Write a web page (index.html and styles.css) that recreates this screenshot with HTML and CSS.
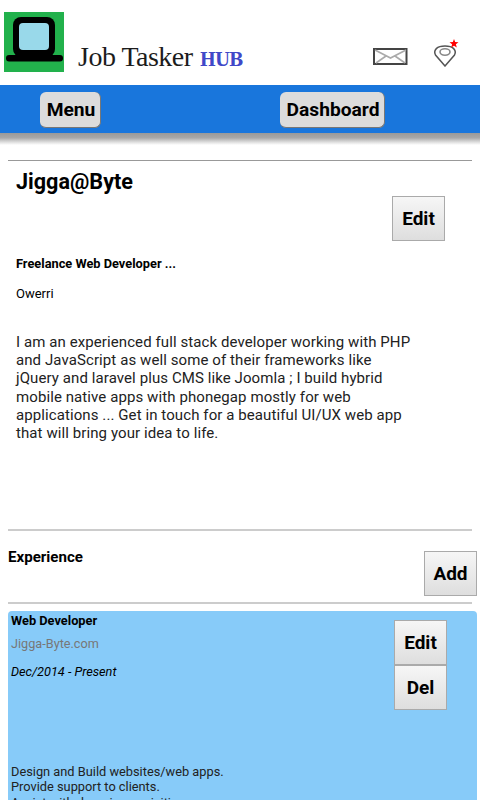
FILE: index.html
```html
<!DOCTYPE html>
<html lang="en">
<head>
    <meta charset="UTF-8">
    <meta name="viewport" content="width=device-width, initial-scale=1.0">
    <title>Job Tasker HUB</title>
    <link rel="stylesheet" href="styles.css">
</head>
<body>
    <header class="top">
        <svg class="logo" width="60" height="60" viewBox="0 0 60 60">
            <rect width="60" height="60" fill="#22b14c"/>
            <rect x="9" y="5" width="42" height="40" rx="8" fill="#000"/>
            <rect x="15" y="11" width="30" height="27" rx="4" fill="#99d9ea"/>
            <rect x="2" y="43" width="57" height="6.5" rx="3" fill="#000"/>
        </svg>
        <div class="brand"><span class="brand-name">Job Tasker</span><span class="brand-hub">HUB</span></div>
        <div class="top-icons">
            <svg class="mail" width="35" height="17" viewBox="0 0 35 17">
                <rect x="1" y="1" width="32.5" height="15" fill="#fff" stroke="#444" stroke-width="2"/>
                <path d="M2 2 L17.5 10 L33 2 M3 15 L13 8 M32 15 L22 8" fill="none" stroke="#aaa" stroke-width="1.6"/>
            </svg>
            <span class="pin">
                <svg width="24" height="22" viewBox="0 0 24 22">
                    <path d="M12 21 L2.5 10 C0 5 4 1 12 1 C20 1 24 5 21.5 10 Z" fill="#fff" stroke="#555" stroke-width="1.5"/>
                    <ellipse cx="12" cy="7" rx="5" ry="3.2" fill="#fff" stroke="#888" stroke-width="1.6"/>
                </svg>
                <svg class="pin-star" width="10" height="9" viewBox="0 0 10 10">
                    <path d="M5 0 L6.3 3.4 L10 3.6 L7.1 5.9 L8.1 9.5 L5 7.5 L1.9 9.5 L2.9 5.9 L0 3.6 L3.7 3.4 Z" fill="#f00"/>
                </svg>
            </span>
        </div>
    </header>

    <nav class="navbar">
        <button class="nav-btn nav-menu">Menu</button>
        <button class="nav-btn nav-dash">Dashboard</button>
    </nav>
    <div class="nav-shadow"></div>

    <main class="content">
        <section class="profile">
            <h1 class="name">Jigga@Byte</h1>
            <button class="btn btn-edit">Edit</button>
            <p class="title">Freelance Web Developer ...</p>
            <p class="city">Owerri</p>
            <p class="bio">I am an experienced full stack developer working with PHP and JavaScript as well some of their frameworks like jQuery and laravel plus CMS like Joomla ; I build hybrid mobile native apps with phonegap mostly for web applications ... Get in touch for a beautiful UI/UX web app that will bring your idea to life.</p>
        </section>

        <section class="exp-head">
            <h2>Experience</h2>
            <button class="btn btn-add">Add</button>
        </section>

        <section class="job">
            <div class="job-top">
                <div class="job-info">
                    <h3>Web Developer</h3>
                    <p class="company">Jigga-Byte.com</p>
                    <p class="dates">Dec/2014 - Present</p>
                </div>
                <div class="job-btns">
                    <button class="btn">Edit</button>
                    <button class="btn">Del</button>
                </div>
            </div>
            <p class="job-desc">Design and Build websites/web apps.<br>Provide support to clients.<br>Assist with domain acquisition.</p>
        </section>
    </main>
</body>
</html>
```

FILE: styles.css
```css
body {
    font-family: Roboto, Arial, sans-serif;
    background-color: #fff;
    color: #000;
    margin: 0;
    padding: 0;
    overflow: hidden;
}
.top {
    height: 85px;
    display: flex;
    align-items: flex-start;
    padding-left: 4px;
    box-sizing: border-box;
    padding-top: 12px;
}
.logo {
    flex: none;
}
.brand {
    margin-left: 14px;
    margin-top: 30px;
    white-space: nowrap;
    line-height: 30px;
}
.brand-name {
    font-family: "Liberation Serif", serif;
    font-size: 28px;
    letter-spacing: -0.5px;
    color: #1c1c1c;
}
.brand-hub {
    font-family: "DejaVu Serif", serif;
    font-stretch: condensed;
    font-weight: bold;
    font-size: 19px;
    margin-left: 7px;
    letter-spacing: -0.9px;
    color: #4048c8;
}
.top-icons {
    margin-left: auto;
    margin-right: 23px;
    margin-top: 33px;
    display: flex;
    align-items: flex-start;
    gap: 25px;
}
.mail {
    margin-top: 3px;
}
.pin {
    position: relative;
    display: block;
    height: 22px;
}
.pin-star {
    position: absolute;
    top: -6px;
    right: -2px;
}
.navbar {
    height: 48px;
    background-color: #1976dc;
    display: flex;
    align-items: flex-start;
    padding-top: 7px;
    padding-left: 40px;
    box-sizing: border-box;
}
.nav-shadow {
    height: 12px;
    margin-bottom: 15px;
    background: linear-gradient(#999, #a8a8a8 40%, #e4e4e4 80%, #fff);
}
.nav-btn {
    font-family: Roboto, Arial, sans-serif;
    font-weight: bold;
    font-size: 19.2px;
    height: 36px;
    padding: 0 0 0 2px;
    background: #dcdcdc;
    border: none;
    border-bottom: 1px solid #777;
    border-right: 1px solid #777;
    border-radius: 6px;
    color: #000;
}
.nav-menu {
    width: 61px;
}
.nav-dash {
    margin-left: 179px;
    width: 105px;
}
.content {
    padding: 0 8px;
}
.profile {
    border-top: 1px solid #999;
    border-bottom: 2px solid #ccc;
    height: 368px;
    display: flex;
    flex-direction: column;
}
.name {
    font-size: 21.6px;
    line-height: 26px;
    margin: 8px 0 0 8px;
}
.btn {
    font-family: Roboto, Arial, sans-serif;
    font-weight: bold;
    font-size: 19px;
    width: 53px;
    height: 45px;
    padding: 0;
    color: #000;
    border: 1px solid #aaa;
    background: linear-gradient(#f6f6f6, #dedede);
    display: block;
}
.btn-edit {
    align-self: flex-end;
    margin: 1px 27px 0 0;
}
.title {
    font-size: 12.8px;
    font-weight: bold;
    line-height: 14px;
    margin: 16px 0 0 8px;
}
.city {
    font-size: 13px;
    line-height: 14px;
    margin: 16px 0 0 8px;
}
.bio {
    font-size: 15px;
    letter-spacing: 0.09px;
    line-height: 18.2px;
    margin: 32px 0 0 8px;
    width: 400px;
    color: #222;
}
.exp-head {
    height: 71px;
    border-bottom: 2px solid #ccc;
    display: flex;
    justify-content: space-between;
    align-items: flex-start;
}
.exp-head h2 {
    font-size: 15.1px;
    line-height: 18px;
    margin: 17px 0 0 0;
}
.btn-add {
    margin: 20px -5px 0 0;
}
.job {
    margin: 7px -5px 0 0;
    background-color: #87cbf9;
    border-radius: 4px;
    padding: 2px 3px;
    height: 260px;
}
.job-top {
    display: flex;
    justify-content: space-between;
    height: 151px;
}
.job-info h3 {
    font-size: 12.8px;
    line-height: 16px;
    margin: 0;
}
.company {
    font-size: 12.7px;
    line-height: 16px;
    margin: 7px 0 0 0;
    color: #777;
}
.dates {
    font-size: 12.7px;
    line-height: 14px;
    font-style: italic;
    margin: 13px 0 0 0;
}
.job-btns {
    margin: 7px 27px 0 0;
}
.job-desc {
    font-size: 12.8px;
    line-height: 15.4px;
    margin: 0;
    color: #222;
}
```
